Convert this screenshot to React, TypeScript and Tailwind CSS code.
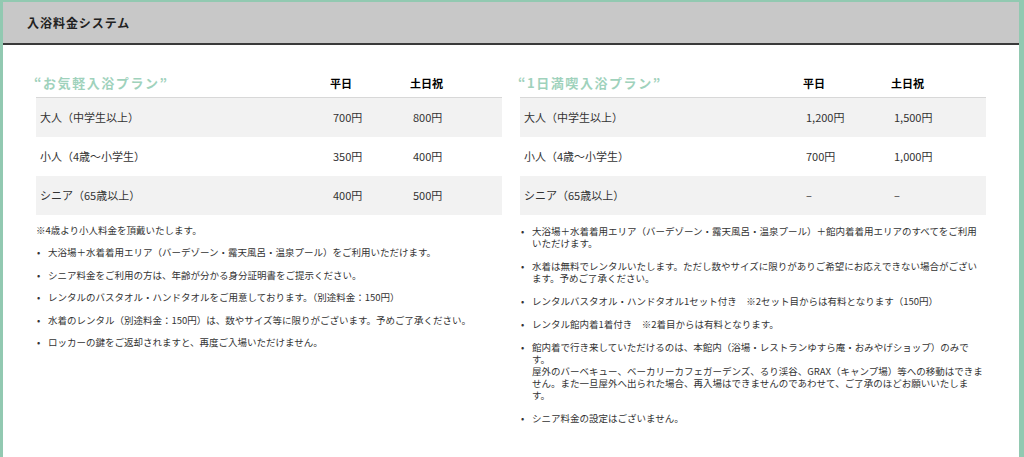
const font = { fontFamily: '"Noto Sans CJK JP", "Liberation Sans", sans-serif' };

function Table({ title, rows, c1, c2 }: { title: string; rows: [string, string, string][]; c1: string; c2: string }) {
  return (
    <div className="w-[466px]">
      <div className="flex h-[29px] items-center border-b border-[#d8d8d8] text-[11px] font-bold">
        <div className="flex-1 -ml-[2px] text-[13px] tracking-[0.12em] text-[#9fd2bc]">{title}</div>
        <div className={c1}>平日</div>
        <div className={c2}>土日祝</div>
      </div>
      {rows.map((r, i) => (
        <div key={i} className={`flex h-[39px] items-center text-[11px] text-[#333] ${i % 2 === 0 ? 'bg-[#f2f2f2]' : ''}`}>
          <div className="flex-1 pl-[4px]">{r[0]}</div>
          <div className={c1 + ' pl-[3px]'}>{r[1]}</div>
          <div className={c2 + ' pl-[3px]'}>{r[2]}</div>
        </div>
      ))}
    </div>
  );
}

function Bullets({ items, gap }: { items: React.ReactNode[]; gap: string }) {
  return (
    <ul className={`flex flex-col ${gap} text-[9.5px] leading-[12px] text-[#333]`}>
      {items.map((t, i) => (
        <li key={i} className="flex">
          <span className="w-[12px] shrink-0 pl-[1px]">•</span>
          <span className="pr-[2px]">{t}</span>
        </li>
      ))}
    </ul>
  );
}

export default function App() {
  return (
    <div style={font} className="h-[457px] w-[1024px] overflow-hidden border-l-[3px] border-r-[5px] border-t-[2px] border-[#92c9b1] bg-white">
      <div className="flex h-[43px] items-center border-b-[2px] border-[#3a3a3a] bg-[#c8c8c8] pl-[24px] text-[12px] font-bold tracking-[0.08em] text-[#222]">
        入浴料金システム
      </div>
      <div className="flex gap-[18px] pl-[33px] pt-[24px]">
        <div className="w-[466px]">
          <Table
            title="“お気軽入浴プラン”"
            c1="w-[80px]"
            c2="w-[92px]"
            rows={[
              ['大人（中学生以上）', '700円', '800円'],
              ['小人（4歳〜小学生）', '350円', '400円'],
              ['シニア（65歳以上）', '400円', '500円'],
            ]}
          />
          <div className="mt-[9px] text-[9.5px] leading-[12px] text-[#333]">※4歳より小人料金を頂戴いたします。</div>
          <div className="mt-[10px]">
            <Bullets
              gap="gap-[10.5px]"
              items={[
                '大浴場＋水着着用エリア（バーデゾーン・露天風呂・温泉プール）をご利用いただけます。',
                'シニア料金をご利用の方は、年齢が分かる身分証明書をご提示ください。',
                'レンタルのバスタオル・ハンドタオルをご用意しております。（別途料金：150円）',
                '水着のレンタル（別途料金：150円）は、数やサイズ等に限りがございます。予めご了承ください。',
                'ロッカーの鍵をご返却されますと、再度ご入場いただけません。',
              ]}
            />
          </div>
        </div>
        <div className="w-[466px]">
          <Table
            title="“1日満喫入浴プラン”"
            c1="w-[88px]"
            c2="w-[95px]"
            rows={[
              ['大人（中学生以上）', '1,200円', '1,500円'],
              ['小人（4歳〜小学生）', '700円', '1,000円'],
              ['シニア（65歳以上）', '–', '–'],
            ]}
          />
          <div className="mt-[10px]">
            <Bullets
              gap="gap-[11px]"
              items={[
                '大浴場＋水着着用エリア（バーデゾーン・露天風呂・温泉プール）＋館内着着用エリアのすべてをご利用いただけます。',
                '水着は無料でレンタルいたします。ただし数やサイズに限りがありご希望にお応えできない場合がございます。予めご了承ください。',
                'レンタルバスタオル・ハンドタオル1セット付き　※2セット目からは有料となります（150円）',
                'レンタル館内着1着付き　※2着目からは有料となります。',
                <>館内着で行き来していただけるのは、本館内（浴場・レストランゆすら庵・おみやげショップ）のみです。<br />屋外のバーベキュー、ベーカリーカフェガーデンズ、るり渓谷、GRAX（キャンプ場）等への移動はできません。また一旦屋外へ出られた場合、再入場はできませんのであわせて、ご了承のほどお願いいたします。</>,
                'シニア料金の設定はございません。',
              ]}
            />
          </div>
        </div>
      </div>
    </div>
  );
}
